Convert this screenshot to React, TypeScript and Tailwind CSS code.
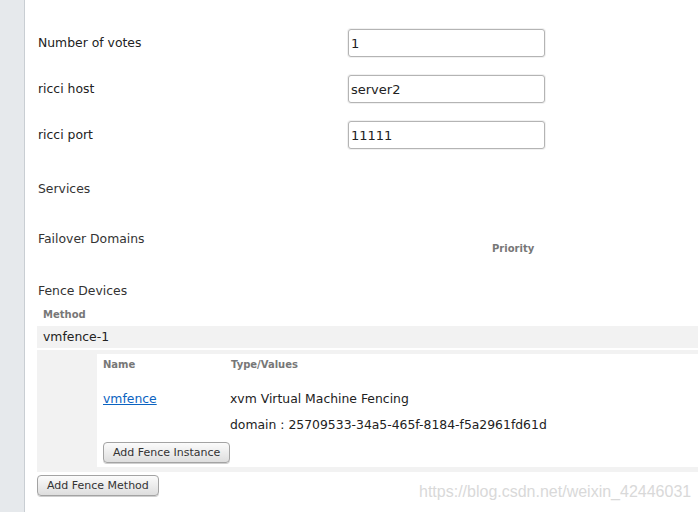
import React from "react";

const font = { fontFamily: "'DejaVu Sans', 'Noto Sans', sans-serif" };

function Field({ label, value }: { label: string; value: string }) {
  return (
    <div className="flex items-center h-[28px]">
      <div className="w-[311px] pl-[1px] text-[12.4px] leading-[16px] text-[#222]">{label}</div>
      <input
        readOnly
        value={value}
        className="w-[197px] h-[28px] border border-[#b4b4b4] rounded-[3px] px-[2px] text-[13px] text-[#222] bg-white shadow-[0_0_0_1px_#f1f1f1] outline-none"
        style={font}
      />
    </div>
  );
}

function Btn({ children }: { children: React.ReactNode }) {
  return (
    <button
      className="block h-[21px] px-[9px] border border-[#a3a3a3] rounded-[4px] bg-gradient-to-b from-[#fbfbfb] to-[#dedede] text-[11px] leading-[13px] text-[#333] shadow-[0_1px_0_#cfcfcf]"
      style={font}
    >
      {children}
    </button>
  );
}

export default function App() {
  return (
    <div className="relative flex w-[698px] h-[512px] overflow-hidden bg-white" style={font}>
      <div className="w-[25px] shrink-0 bg-[#e6e9ec] border-r border-[#c9ced3]" />
      <div className="flex-1 pl-[12px] flex flex-col">
        <div className="pt-[29px] flex flex-col gap-[18px]">
          <Field label="Number of votes" value="1" />
          <Field label="ricci host" value="server2" />
          <Field label="ricci port" value="11111" />
        </div>
        <div className="mt-[32px] h-[16px] pl-[1px] text-[12.4px] leading-[16px] text-[#333]">Services</div>
        <div className="mt-[34px] flex items-start">
          <div className="w-[455px] pl-[1px] text-[12.4px] leading-[16px] text-[#333]">Failover Domains</div>
          <div className="pt-[12px] text-[10px] leading-[12px] font-bold text-[#777]">Priority</div>
        </div>
        <div className="mt-[28px] pl-[1px] text-[12.4px] leading-[16px] text-[#333]">Fence Devices</div>
        <div className="mt-[10px] pl-[6px] text-[10px] leading-[12px] font-bold text-[#777]">Method</div>
        <div className="mt-[5px] h-[22px] bg-[#f2f2f2] pl-[6px] flex items-center text-[12.4px] text-[#222]">vmfence-1</div>
        <div className="mt-[2px] bg-[#f2f2f2] pl-[60px] pt-[4px] pb-[5px]">
          <div className="bg-white pl-[6px] pt-[5px] pb-[4px]">
            <div className="flex text-[10px] leading-[12px] font-bold text-[#777]">
              <div className="w-[128px]">Name</div>
              <div>Type/Values</div>
            </div>
            <div className="mt-[20px] flex text-[12.4px] leading-[16px] text-[#222]">
              <div className="w-[127px]">
                <a href="#" className="text-[#0b63c1] underline">vmfence</a>
              </div>
              <div className="flex flex-col gap-[10px]">
                <div>xvm Virtual Machine Fencing</div>
                <div>domain : 25709533-34a5-465f-8184-f5a2961fd61d</div>
              </div>
            </div>
            <div className="mt-[9px] flex">
              <Btn>Add Fence Instance</Btn>
            </div>
          </div>
        </div>
        <div className="mt-[3px] flex">
          <Btn>Add Fence Method</Btn>
        </div>
      </div>
      <div
        className="absolute left-[419px] top-[483px] text-[16px] leading-[18px] text-[#d9d9d9]"
        style={{ fontFamily: "'Liberation Sans', Arial, sans-serif" }}
      >
        https://blog.csdn.net/weixin_42446031
      </div>
    </div>
  );
}
